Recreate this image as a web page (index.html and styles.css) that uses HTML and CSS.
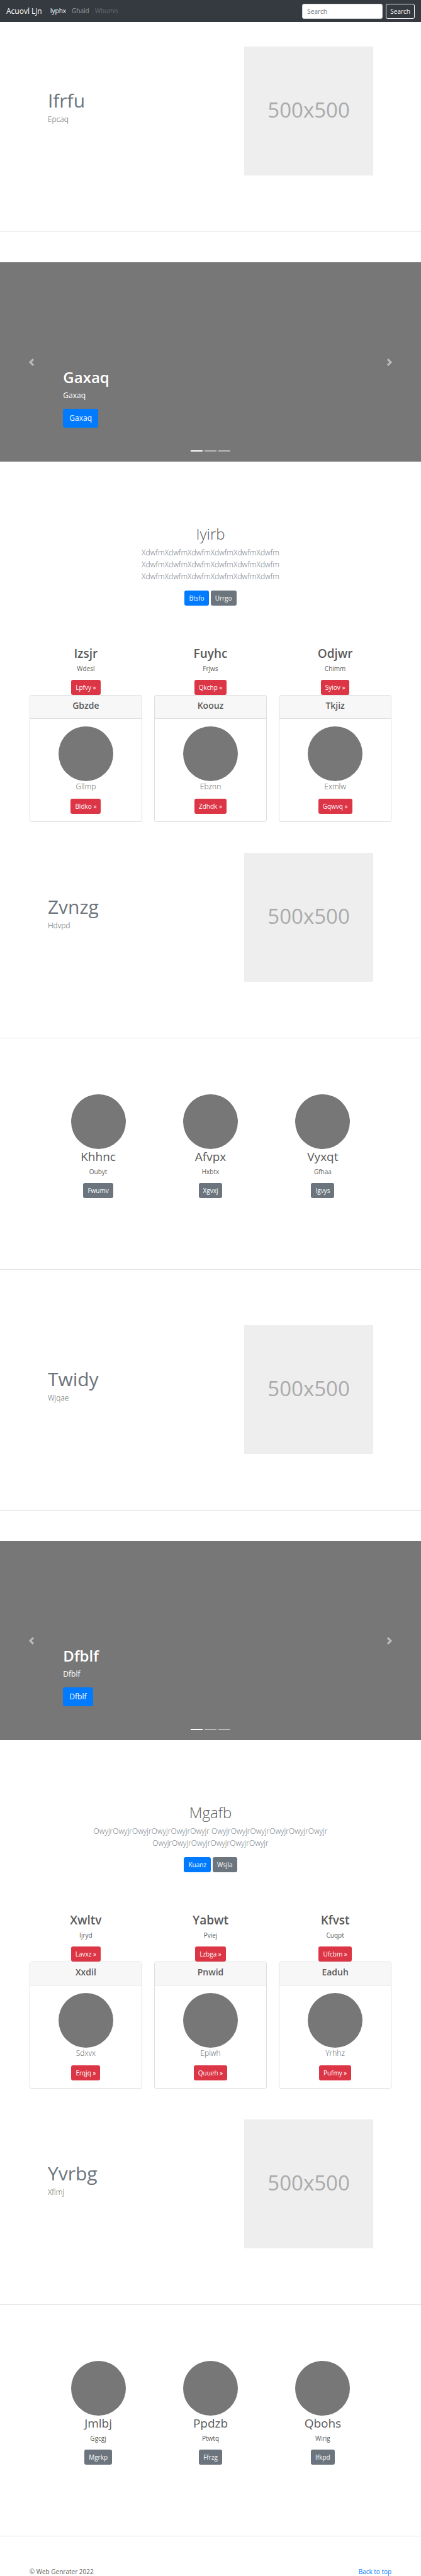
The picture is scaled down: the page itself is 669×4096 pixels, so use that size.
FILE: index.html
```html
<!DOCTYPE html>
<html lang="en">
<head>
<meta charset="utf-8">
<meta name="viewport" content="width=device-width, initial-scale=1">
<title>Acuovl Ljn</title>
<link rel="stylesheet" href="styles.css">
</head>
<body>
<header class="navbar">
  <a class="brand" href="#">Acuovl Ljn</a>
  <nav class="nav">
    <a class="nav-link active" href="#">Iyphx</a>
    <a class="nav-link" href="#">Ghaid</a>
    <a class="nav-link disabled" href="#">Wbumn</a>
  </nav>
  <form class="search">
    <input class="search-input" type="text" placeholder="Search" aria-label="Search">
    <button class="btn btn-outline" type="button">Search</button>
  </form>
</header>

<main>
  <section class="feature feature-first">
    <div class="feature-text">
      <h2 class="feature-title">Ifrfu</h2>
      <p class="lead">Epcaq</p>
    </div>
    <div class="feature-media"><div class="placeholder">500x500</div></div>
  </section>
  <hr class="divider">

  <section class="carousel">
    <button class="carousel-control prev" type="button" aria-label="Previous">
      <svg class="chevron" viewBox="0 0 8 8"><path d="M5.25 0l-4 4 4 4 1.5-1.5L4.25 4l2.5-2.5L5.25 0z"/></svg>
    </button>
    <div class="caption">
      <h1 class="caption-title">Gaxaq</h1>
      <p class="caption-text">Gaxaq</p>
      <a class="btn btn-primary btn-lg" href="#">Gaxaq</a>
    </div>
    <div class="indicators"><span class="dot current"></span><span class="dot"></span><span class="dot"></span></div>
    <button class="carousel-control next" type="button" aria-label="Next">
      <svg class="chevron" viewBox="0 0 8 8"><path d="M2.75 0l-1.5 1.5L3.75 4l-2.5 2.5L2.75 8l4-4-4-4z"/></svg>
    </button>
  </section>

  <section class="intro">
    <h1 class="intro-title">Iyirb</h1>
    <p class="lead intro-text">XdwfmXdwfmXdwfmXdwfmXdwfmXdwfm XdwfmXdwfmXdwfmXdwfmXdwfmXdwfm XdwfmXdwfmXdwfmXdwfmXdwfmXdwfm</p>
    <div class="actions">
      <a class="btn btn-primary" href="#">Btsfo</a>
      <a class="btn btn-secondary" href="#">Urrgo</a>
    </div>
  </section>

  <section class="plans">
    <article class="column">
      <h2 class="column-title strong">Izsjr</h2>
      <p class="column-text">Wdesl</p>
      <a class="btn btn-danger" href="#">Lpfvy »</a>
      <div class="card">
        <h4 class="card-header">Gbzde</h4>
        <div class="card-body"><div class="avatar"></div><p class="lead">Gllmp</p><a class="btn btn-danger" href="#">Bldko »</a></div>
      </div>
    </article>
    <article class="column">
      <h2 class="column-title strong">Fuyhc</h2>
      <p class="column-text">Frjws</p>
      <a class="btn btn-danger" href="#">Qkchp »</a>
      <div class="card">
        <h4 class="card-header">Koouz</h4>
        <div class="card-body"><div class="avatar"></div><p class="lead">Ebznn</p><a class="btn btn-danger" href="#">Zdhdk »</a></div>
      </div>
    </article>
    <article class="column">
      <h2 class="column-title strong">Odjwr</h2>
      <p class="column-text">Chimm</p>
      <a class="btn btn-danger" href="#">Syiov »</a>
      <div class="card">
        <h4 class="card-header">Tkjiz</h4>
        <div class="card-body"><div class="avatar"></div><p class="lead">Exmlw</p><a class="btn btn-danger" href="#">Gqwvq »</a></div>
      </div>
    </article>
  </section>

  <section class="feature feature-after-plans">
    <div class="feature-text">
      <h2 class="feature-title">Zvnzg</h2>
      <p class="lead">Hdvpd</p>
    </div>
    <div class="feature-media"><div class="placeholder">500x500</div></div>
  </section>
  <hr class="divider">

  <section class="people">
    <article class="column">
      <div class="avatar"></div>
      <h2 class="column-title">Khhnc</h2>
      <p class="column-text">Oubyt</p>
      <a class="btn btn-secondary" href="#">Fwumv</a>
    </article>
    <article class="column">
      <div class="avatar"></div>
      <h2 class="column-title">Afvpx</h2>
      <p class="column-text">Hxbtx</p>
      <a class="btn btn-secondary" href="#">Xgvxj</a>
    </article>
    <article class="column">
      <div class="avatar"></div>
      <h2 class="column-title">Vyxqt</h2>
      <p class="column-text">Gfhaa</p>
      <a class="btn btn-secondary" href="#">Igvys</a>
    </article>
  </section>
  <hr class="divider">

  <section class="feature">
    <div class="feature-text">
      <h2 class="feature-title">Twidy</h2>
      <p class="lead">Wjqae</p>
    </div>
    <div class="feature-media"><div class="placeholder">500x500</div></div>
  </section>
  <hr class="divider">

  <section class="carousel">
    <button class="carousel-control prev" type="button" aria-label="Previous">
      <svg class="chevron" viewBox="0 0 8 8"><path d="M5.25 0l-4 4 4 4 1.5-1.5L4.25 4l2.5-2.5L5.25 0z"/></svg>
    </button>
    <div class="caption">
      <h1 class="caption-title">Dfblf</h1>
      <p class="caption-text">Dfblf</p>
      <a class="btn btn-primary btn-lg" href="#">Dfblf</a>
    </div>
    <div class="indicators"><span class="dot current"></span><span class="dot"></span><span class="dot"></span></div>
    <button class="carousel-control next" type="button" aria-label="Next">
      <svg class="chevron" viewBox="0 0 8 8"><path d="M2.75 0l-1.5 1.5L3.75 4l-2.5 2.5L2.75 8l4-4-4-4z"/></svg>
    </button>
  </section>

  <section class="intro">
    <h1 class="intro-title">Mgafb</h1>
    <p class="lead intro-text">OwyjrOwyjrOwyjrOwyjrOwyjrOwyjr OwyjrOwyjrOwyjrOwyjrOwyjrOwyjr OwyjrOwyjrOwyjrOwyjrOwyjrOwyjr</p>
    <div class="actions">
      <a class="btn btn-primary" href="#">Kuanz</a>
      <a class="btn btn-secondary" href="#">Wsjla</a>
    </div>
  </section>

  <section class="plans">
    <article class="column">
      <h2 class="column-title strong">Xwltv</h2>
      <p class="column-text">Ijryd</p>
      <a class="btn btn-danger" href="#">Lavxz »</a>
      <div class="card">
        <h4 class="card-header">Xxdil</h4>
        <div class="card-body"><div class="avatar"></div><p class="lead">Sdxvx</p><a class="btn btn-danger" href="#">Erqjq »</a></div>
      </div>
    </article>
    <article class="column">
      <h2 class="column-title strong">Yabwt</h2>
      <p class="column-text">Pviej</p>
      <a class="btn btn-danger" href="#">Lzbga »</a>
      <div class="card">
        <h4 class="card-header">Pnwid</h4>
        <div class="card-body"><div class="avatar"></div><p class="lead">Eplwh</p><a class="btn btn-danger" href="#">Quueh »</a></div>
      </div>
    </article>
    <article class="column">
      <h2 class="column-title strong">Kfvst</h2>
      <p class="column-text">Cuqpt</p>
      <a class="btn btn-danger" href="#">Ufcbm »</a>
      <div class="card">
        <h4 class="card-header">Eaduh</h4>
        <div class="card-body"><div class="avatar"></div><p class="lead">Yrhhz</p><a class="btn btn-danger" href="#">Pufmy »</a></div>
      </div>
    </article>
  </section>

  <section class="feature feature-after-plans">
    <div class="feature-text">
      <h2 class="feature-title">Yvrbg</h2>
      <p class="lead">Xflmj</p>
    </div>
    <div class="feature-media"><div class="placeholder">500x500</div></div>
  </section>
  <hr class="divider">

  <section class="people">
    <article class="column">
      <div class="avatar"></div>
      <h2 class="column-title">Jmlbj</h2>
      <p class="column-text">Ggcgj</p>
      <a class="btn btn-secondary" href="#">Mgrkp</a>
    </article>
    <article class="column">
      <div class="avatar"></div>
      <h2 class="column-title">Ppdzb</h2>
      <p class="column-text">Ptwtq</p>
      <a class="btn btn-secondary" href="#">Ffrzg</a>
    </article>
    <article class="column">
      <div class="avatar"></div>
      <h2 class="column-title">Qbohs</h2>
      <p class="column-text">Wirig</p>
      <a class="btn btn-secondary" href="#">Ifkpd</a>
    </article>
  </section>
  <hr class="divider">
</main>

<footer class="footer">
  <span>© Web Genrater 2022</span>
  <a class="top-link" href="#">Back to top</a>
</footer>
</body>
</html>
```

FILE: styles.css
```css
* {
  box-sizing: border-box;
}

body {
  margin: 0;
  background: #fff;
  color: #5a5a5a;
  font-family: "Open Sans", "Noto Sans", sans-serif;
  font-size: 10px;
  line-height: 15px;
}

h1, h2, h4, p {
  margin: 0;
}

a {
  text-decoration: none;
}

/* Navigation */
.navbar {
  display: flex;
  align-items: center;
  min-height: 35px;
  padding: 0 10px;
  background: #343a40;
}

.brand {
  margin-right: 13px;
  color: #fff;
  font-size: 12px;
  line-height: 18px;
}

.nav {
  display: flex;
  gap: 9px;
}

.nav-link {
  color: rgba(255, 255, 255, 0.5);
}

.nav-link.active {
  color: #fff;
}

.nav-link.disabled {
  color: rgba(255, 255, 255, 0.25);
}

.search {
  display: flex;
  gap: 5px;
  margin-left: auto;
}

.search-input {
  width: 128px;
  height: 24px;
  padding: 0 7px;
  border: 1px solid #ced4da;
  border-radius: 3px;
  background: #fff;
  color: #495057;
  font: inherit;
}

.search-input::placeholder {
  color: #6c757d;
  opacity: 1;
}

/* Buttons */
.btn {
  display: inline-block;
  height: 24px;
  padding: 0 6px;
  border: 1px solid transparent;
  border-radius: 3px;
  color: #fff;
  font-family: inherit;
  font-size: 10px;
  line-height: 22px;
  white-space: nowrap;
}

.btn-primary {
  background: #007bff;
}

.btn-secondary {
  background: #6c757d;
}

.btn-danger {
  background: #dc3545;
}

.btn-outline {
  border-color: #f8f9fa;
  background: transparent;
  color: #f8f9fa;
}

.btn-lg {
  height: 30px;
  padding: 0 9px;
  font-size: 12px;
  line-height: 28px;
}

/* Shared text and shapes */
.lead {
  font-size: 12px;
  font-weight: 300;
  line-height: 18px;
}

.avatar {
  width: 87px;
  height: 87px;
  border-radius: 50%;
  background: #777;
}

.divider {
  height: 1px;
  margin: 0;
  border: 0;
  background: #e5e5e5;
}

/* Features */
.feature {
  display: grid;
  grid-template-columns: 7fr 5fr;
  padding: 88px 10% 89px;
}

.feature-first {
  padding-top: 39px;
}

.feature-after-plans {
  padding-top: 49px;
}

.feature-text {
  padding: 67px 9px 0;
}

.feature-media {
  padding: 0 9px;
}

.feature-title {
  margin-bottom: 3px;
  color: #6c757d;
  font-size: 30px;
  font-weight: 400;
  line-height: 37px;
}

.placeholder {
  display: flex;
  align-items: center;
  justify-content: center;
  aspect-ratio: 1;
  padding-bottom: 4px;
  background: #eee;
  color: #aaa;
  font-size: 33px;
  line-height: 40px;
}

/* Carousel */
.carousel {
  position: relative;
  display: flex;
  flex-direction: column;
  justify-content: flex-end;
  min-height: 317px;
  margin-top: 48px;
  padding: 0 15% 54px;
  background: #777;
  color: #fff;
}

.caption {
  display: flex;
  flex-direction: column;
  align-items: flex-start;
}

.caption-title {
  margin-bottom: 5px;
  font-size: 24px;
  font-weight: 600;
  line-height: 30px;
}

.caption-text {
  margin-bottom: 12px;
  font-size: 12px;
  line-height: 18px;
}

.carousel-control {
  position: absolute;
  top: 0;
  bottom: 0;
  display: flex;
  align-items: center;
  justify-content: center;
  width: 15%;
  padding: 0;
  border: 0;
  background: transparent;
  opacity: 0.5;
}

.prev {
  left: 0;
}

.next {
  right: 0;
}

.chevron {
  width: 12px;
  height: 12px;
  fill: #fff;
}

.indicators {
  position: absolute;
  right: 0;
  bottom: 16px;
  left: 0;
  display: flex;
  justify-content: center;
  gap: 3px;
}

.dot {
  width: 19px;
  height: 2px;
  background: rgba(255, 255, 255, 0.5);
}

.dot.current {
  background: #fff;
}

/* Intro */
.intro {
  padding: 100px 15% 64px;
  text-align: center;
}

.intro-title {
  margin-bottom: 5px;
  font-size: 24px;
  font-weight: 300;
  line-height: 30px;
}

.intro-text {
  max-width: 410px;
  margin: 0 auto 13px;
  color: #6c757d;
  line-height: 19px;
}

.actions {
  display: flex;
  justify-content: center;
  gap: 3px;
}

/* Columns */
.plans {
  display: grid;
  grid-template-columns: repeat(3, 1fr);
  gap: 19px;
  padding: 0 7%;
}

.people {
  display: grid;
  grid-template-columns: repeat(3, 1fr);
  padding: 89px 10% 113px;
}

.column {
  display: flex;
  flex-direction: column;
  align-items: center;
  text-align: center;
}

.column-title {
  margin-bottom: 5px;
  font-size: 19px;
  font-weight: 400;
  line-height: 24px;
}

.column-title.strong {
  font-weight: 600;
}

.column-text {
  margin-bottom: 10px;
}

.card {
  align-self: stretch;
  border: 1px solid #dfdfdf;
  border-radius: 3px;
}

.card-header {
  padding: 7px 12px 11px;
  border-bottom: 1px solid #dfdfdf;
  background: #f7f7f7;
  font-size: 14px;
  font-weight: 600;
  line-height: 18px;
}

.card-body {
  display: flex;
  flex-direction: column;
  align-items: center;
  padding: 12px;
}

.card-body .lead {
  margin-bottom: 10px;
}

/* Footer */
.footer {
  display: flex;
  justify-content: space-between;
  padding: 50px 7% 0;
  line-height: 13px;
}

.top-link {
  color: #007bff;
}
```
